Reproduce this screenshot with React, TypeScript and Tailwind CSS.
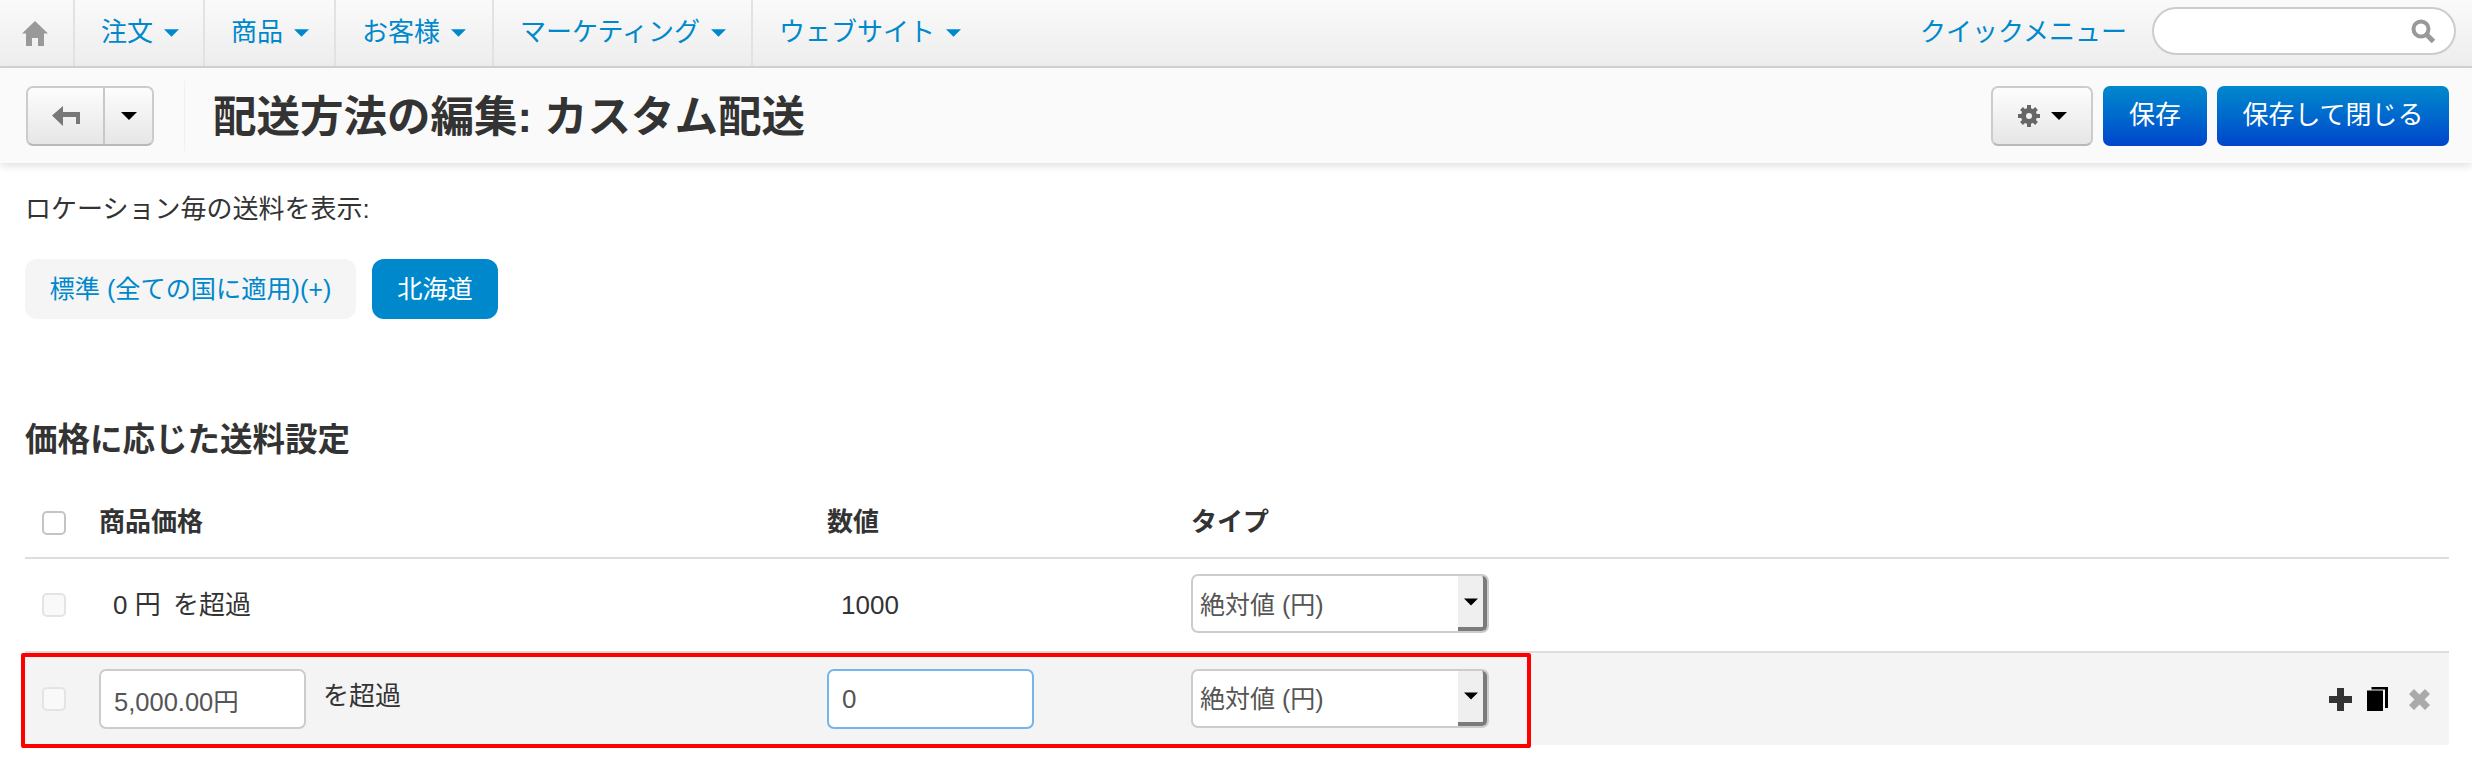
import React from 'react';

const navItems = [
  { label: '注文', width: 'w-[130px]' },
  { label: '商品', width: 'w-[131px]' },
  { label: 'お客様', width: 'w-[158px]' },
  { label: 'マーケティング', width: 'w-[259px]' },
  { label: 'ウェブサイト', width: 'w-[225px]' },
];

function Caret({ className }: { className: string }) {
  return (
    <svg viewBox="0 0 16 8" className={className} fill="currentColor">
      <path d="M0 0h16L8 8z" />
    </svg>
  );
}

function TypeSelect({ className }: { className?: string }) {
  return (
    <div className={`flex h-[59px] w-[298px] items-stretch rounded-[7px] border-2 border-[#cccccc] bg-white pl-[7px] text-[25px] text-[#555555] ${className ?? ''}`}>
      <span className="flex-1 self-center pt-[3px] leading-none">絶対値 (円)</span>
      <div className="flex w-[29px] items-center justify-center rounded-r-[5px] border-r-[4px] border-b-[4px] border-[#7b7b7b] bg-[#efefef] text-black">
        <Caret className="h-[8px] w-[14px]" />
      </div>
    </div>
  );
}

function Checkbox({ faded }: { faded?: boolean }) {
  return (
    <div className={`ml-[17px] h-[24px] w-[24px] rounded-[5px] border-2 ${faded ? 'border-[#e4e4e4] bg-[#f9f9f9]' : 'border-[#c4c4c4] bg-white'}`} />
  );
}

export default function App() {
  return (
    <div className="h-[783px] w-[2472px] overflow-hidden bg-white text-[#333333] font-['Liberation_Sans','Noto_Sans_CJK_JP',sans-serif]">
      {/* top nav */}
      <div className="flex h-[68px] items-stretch justify-between border-b-2 border-[#d4d4d4] bg-gradient-to-b from-[#fafafa] to-[#ededed]">
        <div className="flex items-stretch">
          <div className="flex w-[75px] items-center justify-center border-r-2 border-[#e2e2e2] pr-[3px]">
            <svg viewBox="0 0 26 25" className="h-[25px] w-[26px]" fill="#999999">
              <path d="M13 0L26 12.500h-4V25h-6v-8h-6v8H4V12.500H0z" />
            </svg>
          </div>
          {navItems.map((item, i) => (
            <div
              key={item.label}
              className={`flex items-center gap-[11px] pl-[26px] text-[26px] text-[#0088cc] ${item.width} ${i < navItems.length - 1 ? 'border-r-2 border-[#e2e2e2]' : ''}`}
            >
              <span className="mb-[3px] whitespace-nowrap leading-none">{item.label}</span>
              <Caret className="h-[8px] w-[15px] shrink-0" />
            </div>
          ))}
        </div>
        <div className="flex items-center gap-[25px] pr-[16px]">
          <span className="mb-[3px] text-[26px] leading-none text-[#0088cc]">クイックメニュー</span>
          <div className="mb-[5px] flex h-[48px] w-[304px] items-center justify-end rounded-full border-2 border-[#cccccc] bg-white pr-[18px]">
            <svg viewBox="0 0 25 24" className="h-[24px] w-[25px]" fill="none" stroke="#999999">
              <circle cx="10" cy="10" r="7.500" strokeWidth="4" />
              <path d="M15.500 15.500l7 7" strokeWidth="5" />
            </svg>
          </div>
        </div>
      </div>

      {/* toolbar */}
      <div className="relative flex h-[95px] items-center justify-between bg-[#fafafa] pl-[26px] pr-[23px] shadow-[0_3px_8px_rgba(0,0,0,0.12)]">
        <div className="flex items-center">
          <div className="flex h-[60px] w-[128px] rounded-[7px] border-2 border-[#cccccc] border-b-[#b8b8b8] bg-gradient-to-b from-[#fdfdfd] to-[#e6e6e6]">
            <div className="flex w-[77px] items-center justify-center border-r-2 border-[#c8c8c8]">
              <svg viewBox="0 0 28 20" className="h-[20px] w-[28px]" fill="#777777">
                <path d="M0 9.500L11 0v6h17v12h-4v-7H11v9z" />
              </svg>
            </div>
            <div className="flex flex-1 items-center justify-center text-black">
              <Caret className="h-[8px] w-[16px]" />
            </div>
          </div>
          <div className="ml-[30px] mr-[28px] h-[70px] w-px bg-[#f0f0f0]" />
          <h1 className="mt-[4px] whitespace-nowrap text-[43.500px] leading-none font-bold">配送方法の編集: カスタム配送</h1>
        </div>
        <div className="flex items-center gap-[10px]">
          <div className="flex h-[60px] w-[102px] items-center justify-center gap-[11px] rounded-[7px] border-2 border-[#cccccc] border-b-[#b8b8b8] bg-gradient-to-b from-[#fdfdfd] to-[#e6e6e6]">
            <svg viewBox="0 0 22 22" className="h-[22px] w-[22px]" fill="none" stroke="#666666">
              <circle cx="11" cy="11" r="5.500" strokeWidth="5" />
              <path d="M11 0v4M11 18v4M0 11h4M18 11h4M3.500 3.500l3 3M15.500 15.500l3 3M18.500 3.500l-3 3M6.500 15.500l-3 3" strokeWidth="4" />
            </svg>
            <Caret className="h-[8px] w-[16px] text-black" />
          </div>
          <div className="flex h-[60px] w-[104px] items-center justify-center rounded-[7px] bg-gradient-to-b from-[#0088cc] to-[#0044cc] text-[26px] text-white">保存</div>
          <div className="flex h-[60px] w-[232px] items-center justify-center rounded-[7px] bg-gradient-to-b from-[#0088cc] to-[#0044cc] text-[26px] text-white">保存して閉じる</div>
        </div>
      </div>

      {/* content */}
      <div className="relative pl-[25px] pr-[23px]">
        <p className="pt-[33px] text-[26px] leading-[26px]">ロケーション毎の送料を表示:</p>
        <div className="mt-[37px] flex gap-[16px] text-[25.200px]">
          <div className="flex h-[60px] w-[331px] items-center justify-center rounded-[12px] bg-[#f5f5f5] pt-[2px] text-[#0088cc]">標準 (全ての国に適用)(+)</div>
          <div className="flex h-[60px] w-[126px] items-center justify-center rounded-[12px] bg-[#0088cc] pt-[2px] text-white">北海道</div>
        </div>
        <h2 className="mt-[102px] text-[32.500px] leading-[38px] font-bold">価格に応じた送料設定</h2>

        <div className="mt-[29px] grid h-[71px] grid-cols-[74px_728px_364px_1fr] items-center border-b-2 border-[#dddddd] text-[26px] font-bold">
          <Checkbox />
          <span>商品価格</span>
          <span>数値</span>
          <span>タイプ</span>
        </div>

        <div className="grid h-[94px] grid-cols-[74px_728px_364px_1fr] items-center border-b-2 border-[#dddddd] text-[26px]">
          <Checkbox faded />
          <span className="pl-[14px]">0 円&nbsp;&thinsp;を超過</span>
          <span className="pl-[14px]">1000</span>
          <TypeSelect className="mb-[3px]" />
        </div>

        <div className="grid h-[92px] grid-cols-[74px_728px_364px_1fr] items-center bg-[#f4f4f4] text-[26px]">
          <Checkbox faded />
          <div className="flex items-center gap-[17px]">
            <input
              defaultValue="5,000.00円"
              className="h-[60px] w-[207px] rounded-[7px] border-2 border-[#cccccc] bg-white pl-[13px] text-[25.500px] text-[#555555]"
            />
            <span className="mb-[5px]">を超過</span>
          </div>
          <input
            defaultValue="0"
            className="h-[60px] w-[207px] rounded-[7px] border-2 border-[#74b6ec] bg-white pl-[13px] text-[#555555]"
          />
          <div className="flex items-center justify-between pr-[19px]">
            <TypeSelect className="mb-[2px]" />
            <div className="flex items-center gap-[15px]">
              <svg viewBox="0 0 23 23" className="h-[23px] w-[23px]" fill="#333333">
                <path d="M8 0h7v8h8v7h-8v8H8v-8H0V8h8z" />
              </svg>
              <svg viewBox="0 0 21 24" className="h-[24px] w-[21px]" fill="#000000">
                <path d="M0 3.500h16V24H0z" />
                <path d="M4.500 0H21v21h-3V2.500H4.500z" />
              </svg>
              <svg viewBox="0 0 21 21" className="ml-[6px] h-[21px] w-[21px]" fill="#aaaaaa">
                <path d="M5 0l5.500 5.500L16 0l5 5-5.500 5.500L21 16l-5 5-5.500-5.500L5 21l-5-5 5.500-5.500L0 5z" />
              </svg>
            </div>
          </div>
        </div>

        {/* red annotation box */}
        <div className="absolute left-[21px] top-[490px] h-[95px] w-[1510px] rounded-[2px] border-4 border-[#ff0000]" />
      </div>
    </div>
  );
}
